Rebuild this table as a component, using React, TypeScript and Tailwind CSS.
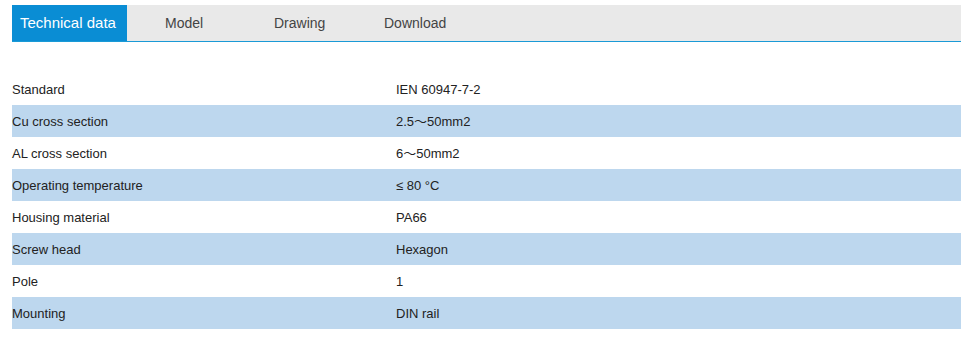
import React from "react";

const rows: [string, string][] = [
  ["Standard", "IEN 60947-7-2"],
  ["Cu cross section", "2.5～50mm2"],
  ["AL cross section", "6～50mm2"],
  ["Operating temperature", "≤ 80 °C"],
  ["Housing material", "PA66"],
  ["Screw head", "Hexagon"],
  ["Pole", "1"],
  ["Mounting", "DIN rail"],
];

export default function App() {
  return (
    <div
      className="w-[964px] h-[348px] bg-white pt-[5px] pl-[12px] pr-[3px]"
      style={{ fontFamily: '"Liberation Sans", Arial, "Noto Sans CJK SC", sans-serif' }}
    >
      <div className="flex h-[37px] bg-[#e9e9e9] border-b border-[#1a9ad6]">
        <div className="w-[115px] h-[36px] bg-[#0a8dd4] text-white text-[15px] flex items-center pt-[1px] pl-[8px]">
          Technical data
        </div>
        <div className="w-[110px] h-[36px] flex items-center pt-[1px] pl-[38px] text-[14px] text-[#444]">
          Model
        </div>
        <div className="w-[110px] h-[36px] flex items-center pt-[1px] pl-[37px] text-[14px] text-[#444]">
          Drawing
        </div>
        <div className="w-[110px] h-[36px] flex items-center pt-[1px] pl-[37px] text-[14px] text-[#444]">
          Download
        </div>
      </div>
      <div className="mt-[31px]">
        {rows.map(([k, v], i) => (
          <div
            key={k}
            className={`flex h-[32px] items-center pt-[1px] text-[13px] text-[#222] ${
              i % 2 === 1 ? "bg-[#bdd7ee]" : "bg-white"
            }`}
          >
            <div className="w-[384px]">{k}</div>
            <div>{v}</div>
          </div>
        ))}
      </div>
    </div>
  );
}
